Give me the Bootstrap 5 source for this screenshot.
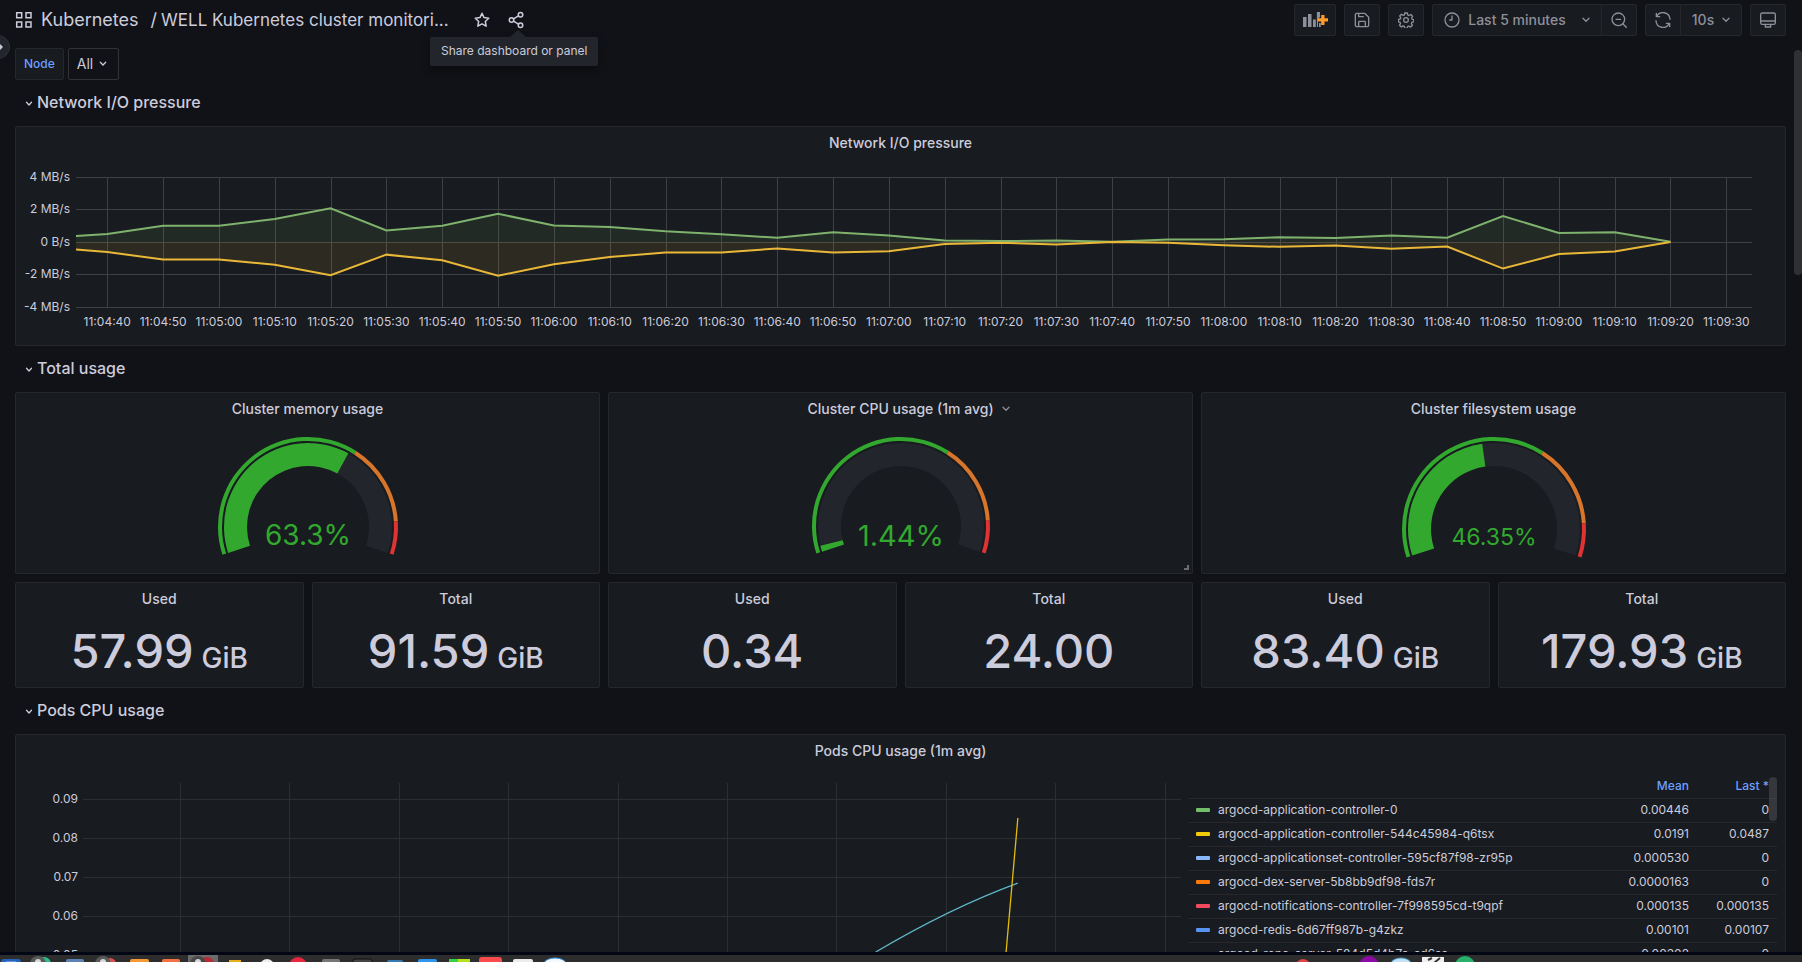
<!DOCTYPE html>
<html lang="en" data-bs-theme="dark">
<head>
<meta charset="utf-8">
<meta name="viewport" content="width=device-width, initial-scale=1">
<title>WELL Kubernetes cluster monitoring</title>
<link href="https://cdn.jsdelivr.net/npm/bootstrap@5.3.0/dist/css/bootstrap.min.css" rel="stylesheet">
<style>
  :root { --canvas: #111217; --panel: #181b1f; --line: #25272c; --ink: #ccccdc; --dim: #8f8f9b; --blue: #6e9fff; }
  body { background: var(--canvas); color: var(--ink); font-family: Inter, "Liberation Sans", sans-serif; font-size: 14px; line-height: 20px; }
  svg { display: block; flex-shrink: 0; }
  .ico { fill: none; stroke: currentColor; stroke-width: 2; stroke-linecap: round; stroke-linejoin: round; }
  .page-pad { padding-left: 15px; padding-right: 16px; }
  .scroll-area { min-height: 0; }
  .topbar { padding-top: 4px; height: 40px; }
  .crumbs { font-size: 18px; line-height: 24px; height: 32px; }
  .crumbs a { color: var(--ink); text-decoration: none; }
  .crumbs .dash-name { font-size: 17px; }
  .icon-btn { background: none; border: 0; padding: 0; color: var(--ink); }
  .tool { --bs-btn-color: var(--dim); --bs-btn-bg: var(--panel); --bs-btn-border-color: var(--line); --bs-btn-border-radius: 2px;
          --bs-btn-font-size: 14px; --bs-btn-font-weight: 500; --bs-btn-line-height: 20px; --bs-btn-padding-y: 0; --bs-btn-padding-x: 9px;
          --bs-btn-hover-color: var(--ink); --bs-btn-hover-bg: #22252b; height: 32px; display: flex; align-items: center; justify-content: center; }
  .tip { position: absolute; top: 37px; left: 430px; background: #22252b; border-radius: 2px; font-size: 12px; line-height: 16px; padding: 6px 11px 7px; box-shadow: 0 4px 8px rgba(0,0,0,.4); white-space: nowrap; }
  .tip::before { content: ""; position: absolute; left: 80px; top: -7px; border: 8px solid transparent; border-top: 0; border-bottom: 7px solid #22252b; }
  .dock-toggle { position: absolute; left: -14px; top: 35px; width: 24px; height: 24px; border-radius: 50%; background: #22252b; border: 1px solid #2f3238; padding: 0; color: var(--ink); }
  .varbar { padding-top: 8px; gap: 4px; }
  .var-name { height: 32px; padding: 0 8px; border: 1px solid var(--line); border-radius: 2px; background: var(--panel); color: var(--blue); font-size: 12px; font-weight: 500; line-height: 30px; }
  .var-pick { height: 32px; width: 51px; padding: 0 8px; border: 1px solid #303238; border-radius: 2px; color: var(--ink); font-size: 14px; appearance: none;
    background: var(--canvas) url("data:image/svg+xml,%3Csvg xmlns='http://www.w3.org/2000/svg' width='8' height='6' viewBox='0 0 8 6'%3E%3Cpath d='M1.300 1.300 4 4l2.700-2.700' fill='none' stroke='%23ccccdc' stroke-width='1.300' stroke-linecap='round'/%3E%3C/svg%3E") no-repeat right 11px center; }
  .section-row { height: 46px; padding: 0 0 2px 10px; gap: 4px; font-size: 16px; font-weight: 500; line-height: 24px; background: none; border: 0; color: var(--ink); }
  .panel { background: var(--panel); border: 1px solid var(--line); border-radius: 2px; min-width: 0; position: relative; }
  .panel-head { height: 32px; font-size: 14px; font-weight: 500; line-height: 20px; margin: 0; color: var(--ink); }
  .panel-row { display: grid; gap: 8px; }
  .three { grid-template-columns: repeat(3, 1fr); }
  .six { grid-template-columns: repeat(6, 1fr); }
  .gauge-panel { height: 182px; }
  .stat-panel { height: 106px; }
  .stat-value { font-size: 47px; font-weight: 500; line-height: 56px; height: 72px; }
  .stat-value span { font-size: 28px; margin-left: 8px; }
  .grip { position: absolute; right: 3px; bottom: 3px; width: 5px; height: 5px; border-right: 2px solid #6a6c72; border-bottom: 2px solid #6a6c72; }
  .chart { width: 100%; overflow: hidden; }
  .chart text { fill: var(--ink); font-size: 12px; }
  .net-chart { height: 186px; }
  .pods-chart { height: 240px; flex: 1 1 0; min-width: 0; }
  .legend-box { width: 589px; margin: 8px 8px 0 7px; position: relative; flex-shrink: 0; }
  .legend-table { width: 100%; font-size: 12px; line-height: 16px; border-collapse: collapse; }
  .legend-table th, .legend-table td { height: 24px; padding: 0 8px; border-bottom: 1px solid var(--line); white-space: nowrap; font-weight: 400; text-align: left; }
  .legend-table thead th { color: var(--blue); font-weight: 500; height: 23px; }
  .legend-table .num { text-align: right; width: 80px; }
  .key { display: inline-block; width: 14px; height: 4px; border-radius: 1px; margin-right: 8px; vertical-align: 2px; }
  .thumb { position: absolute; right: 0; background: rgba(204,204,220,.16); border-radius: 4px; width: 8px; }
  .legend-box .thumb { top: 2px; height: 44px; }
  .page-thumb { top: 50px; height: 225px; }
  .taskbar { background: #2d2d2d; border-top: 3px solid #020615; height: 10px; position: relative; flex-shrink: 0; }
</style>
</head>
<body class="vh-100 overflow-hidden d-flex flex-column">
<div class="scroll-area flex-fill overflow-hidden position-relative">
  <header class="topbar page-pad d-flex justify-content-between align-items-start">
    <div class="d-flex align-items-center crumbs">
      <svg width="18" height="18" viewBox="0 0 18 18" class="ico" style="stroke-width:1.500;stroke-linejoin:miter"><path d="M1.700 1.700h5v5h-5zM11 1.700h5v5h-5zM1.700 11h5v5h-5zM11 11h5v5h-5z"/></svg>
      <a href="#" class="ps-2">Kubernetes</a><span class="ps-2 ms-1 pe-1">/</span><a href="#" class="dash-name">WELL Kubernetes cluster monitori...</a>
      <button class="icon-btn ms-4" aria-label="Mark as favorite"><svg width="18" height="18" viewBox="0 0 24 24" class="ico"><path d="M12 3l2.700 5.800 6.300.8-4.600 4.300 1.200 6.300L12 17.100l-5.600 3.100 1.200-6.300L3 9.600l6.300-.8z"/></svg></button>
      <button class="icon-btn ms-3" aria-label="Share dashboard or panel"><svg width="18" height="18" viewBox="0 0 24 24" class="ico"><circle cx="18" cy="5" r="3"/><circle cx="6" cy="12" r="3"/><circle cx="18" cy="19" r="3"/><path d="M8.700 10.500l6.600-4M8.700 13.500l6.600 4"/></svg></button>
    </div>
    <div class="d-flex gap-2">
      <button class="btn tool" aria-label="Add panel" style="width:42px;padding:0"><svg width="26" height="18" viewBox="0 0 26 18"><path fill="#8f8f9b" d="M1 6h3.500v10H1zM6 3h3.500v13H6zM11 8.500h2.800V16H11zM14.900 1H18v5l-2 2v8h-1.100zM17 12h1.800v4H17z"/><path fill="#ff9b2d" d="M19.200 4h3.300v3.200H26v3.400h-3.500V14h-3.300v-3.400h-3.300V7.200h3.300z"/></svg></button>
      <button class="btn tool" aria-label="Save dashboard"><svg width="16" height="16" viewBox="0 0 24 24" class="ico"><path d="M2 4a2 2 0 0 1 2-2h12l6 6v12a2 2 0 0 1-2 2H4a2 2 0 0 1-2-2zM7 2v5h7M7 22v-7a1 1 0 0 1 1-1h8a1 1 0 0 1 1 1v7"/></svg></button>
      <button class="btn tool" aria-label="Dashboard settings"><svg width="16" height="16" viewBox="0 0 24 24" class="ico"><path d="M10 1.500h4l.7 3 2 .8 2.600-1.600 2.600 2.700-1.500 2.600.8 2 2.500.5v3.200l-2.800.7-.8 2 1.600 2.500-2.700 2.700-2.600-1.500-2 .8-.6 2.600h-3.600l-.7-2.800-2-.8-2.500 1.600-2.700-2.700 1.500-2.600-.8-2-2.500-.6v-3.400l2.800-.7.8-2-1.600-2.500 2.700-2.600 2.600 1.600 2-.8z"/><circle cx="12" cy="12" r="3.500"/></svg></button>
      <div class="btn-group">
        <button class="btn tool" style="width:170px"><svg width="16" height="16" viewBox="0 0 24 24" class="ico"><circle cx="12" cy="12" r="10.500"/><path d="M12 6v6H8.500"/></svg><span class="ms-2 me-3">Last 5 minutes</span><svg width="8" height="6" viewBox="0 0 8 6" class="ico" style="stroke-width:1.300"><path d="M1 1.300 4 4.300l3-3"/></svg></button>
        <button class="btn tool" aria-label="Zoom out time range"><svg width="16" height="16" viewBox="0 0 24 24" class="ico"><circle cx="11" cy="11" r="9.500"/><path d="M7.500 11h7M18 18l5 5"/></svg></button>
      </div>
      <div class="btn-group">
        <button class="btn tool" aria-label="Refresh dashboard"><svg width="16" height="16" viewBox="0 0 24 24" class="ico"><path d="M2 2v5h5M2.500 7A10.500 10.500 0 0 1 22.500 11M22 22v-5h-5M21.500 17A10.500 10.500 0 0 1 1.500 13"/></svg></button>
        <button class="btn tool" style="width:62px">10s<svg width="8" height="6" viewBox="0 0 8 6" class="ico ms-2" style="stroke-width:1.300"><path d="M1 1.300 4 4.300l3-3"/></svg></button>
      </div>
      <button class="btn tool" aria-label="Cycle view mode"><svg width="16" height="16" viewBox="0 0 24 24" class="ico"><rect x="1" y="1.500" width="22" height="17" rx="2.500"/><path d="M1 13.500h22M8 18.500v4h8v-4"/></svg></button>
    </div>
  </header>
  <div class="tip" role="tooltip">Share dashboard or panel</div>
  <button class="dock-toggle" aria-label="Open menu"><svg width="22" height="22" viewBox="0 0 22 22" class="ico" style="stroke-width:1.500"><path d="M11 11h4M13 9l2 2-2 2"/></svg></button>

  <main class="page-pad">
    <div class="varbar d-flex">
      <label class="var-name" for="node">Node</label>
      <select class="var-pick" id="node"><option>All</option></select>
    </div>

    <button class="section-row d-flex align-items-center w-100"><svg width="8" height="6" viewBox="0 0 8 6" class="ico mt-1" style="stroke-width:1.300"><path d="M1.500 1.300 4 4l2.500-2.700"/></svg>Network I/O pressure</button>
    <section class="panel">
      <h2 class="panel-head d-flex align-items-center justify-content-center">Network I/O pressure</h2>
      <svg class="chart net-chart" id="net"></svg>
    </section>

    <button class="section-row d-flex align-items-center w-100"><svg width="8" height="6" viewBox="0 0 8 6" class="ico mt-1" style="stroke-width:1.300"><path d="M1.500 1.300 4 4l2.500-2.700"/></svg>Total usage</button>
    <div class="panel-row three mb-2">
      <section class="panel gauge-panel">
        <h2 class="panel-head d-flex align-items-center justify-content-center">Cluster memory usage</h2>
        <svg class="gauge mx-auto" width="200" height="140" data-value="63.3" data-r="90" data-size="28" data-base="120"></svg>
      </section>
      <section class="panel gauge-panel">
        <h2 class="panel-head d-flex align-items-center justify-content-center">Cluster CPU usage (1m avg)<svg width="8" height="6" viewBox="0 0 8 6" class="ico ms-2" style="stroke-width:1.300;color:var(--dim);margin-right:-16px"><path d="M1 1.300 4 4.300l3-3"/></svg></h2>
        <svg class="gauge mx-auto" width="200" height="140" data-value="1.44" data-r="89" data-size="29" data-base="121"></svg>
        <span class="grip"></span>
      </section>
      <section class="panel gauge-panel">
        <h2 class="panel-head d-flex align-items-center justify-content-center">Cluster filesystem usage</h2>
        <svg class="gauge mx-auto" width="200" height="140" data-value="46.35" data-r="92" data-size="23" data-base="120"></svg>
      </section>
    </div>
    <div class="panel-row six">
      <section class="panel stat-panel"><h2 class="panel-head d-flex align-items-center justify-content-center">Used</h2><div class="stat-value d-flex justify-content-center align-items-baseline pt-2">57.99<span>GiB</span></div></section>
      <section class="panel stat-panel"><h2 class="panel-head d-flex align-items-center justify-content-center">Total</h2><div class="stat-value d-flex justify-content-center align-items-baseline pt-2">91.59<span>GiB</span></div></section>
      <section class="panel stat-panel"><h2 class="panel-head d-flex align-items-center justify-content-center">Used</h2><div class="stat-value d-flex justify-content-center align-items-baseline pt-2">0.34</div></section>
      <section class="panel stat-panel"><h2 class="panel-head d-flex align-items-center justify-content-center">Total</h2><div class="stat-value d-flex justify-content-center align-items-baseline pt-2">24.00</div></section>
      <section class="panel stat-panel"><h2 class="panel-head d-flex align-items-center justify-content-center">Used</h2><div class="stat-value d-flex justify-content-center align-items-baseline pt-2">83.40<span>GiB</span></div></section>
      <section class="panel stat-panel"><h2 class="panel-head d-flex align-items-center justify-content-center">Total</h2><div class="stat-value d-flex justify-content-center align-items-baseline pt-2">179.93<span>GiB</span></div></section>
    </div>

    <button class="section-row d-flex align-items-center w-100"><svg width="8" height="6" viewBox="0 0 8 6" class="ico mt-1" style="stroke-width:1.300"><path d="M1.500 1.300 4 4l2.500-2.700"/></svg>Pods CPU usage</button>
    <section class="panel">
      <h2 class="panel-head d-flex align-items-center justify-content-center">Pods CPU usage (1m avg)</h2>
      <div class="d-flex">
        <svg class="chart pods-chart" id="pods"></svg>
        <div class="legend-box">
          <table class="legend-table">
            <thead><tr><th></th><th class="num">Mean</th><th class="num">Last *</th></tr></thead>
            <tbody>
              <tr><td><span class="key" style="background:#73bf69"></span>argocd-application-controller-0</td><td class="num">0.00446</td><td class="num">0</td></tr>
              <tr><td><span class="key" style="background:#f2cc0c"></span>argocd-application-controller-544c45984-q6tsx</td><td class="num">0.0191</td><td class="num">0.0487</td></tr>
              <tr><td><span class="key" style="background:#8ab8ff"></span>argocd-applicationset-controller-595cf87f98-zr95p</td><td class="num">0.000530</td><td class="num">0</td></tr>
              <tr><td><span class="key" style="background:#ff780a"></span>argocd-dex-server-5b8bb9df98-fds7r</td><td class="num">0.0000163</td><td class="num">0</td></tr>
              <tr><td><span class="key" style="background:#f2495c"></span>argocd-notifications-controller-7f998595cd-t9qpf</td><td class="num">0.000135</td><td class="num">0.000135</td></tr>
              <tr><td><span class="key" style="background:#5794f2"></span>argocd-redis-6d67ff987b-g4zkz</td><td class="num">0.00101</td><td class="num">0.00107</td></tr>
              <tr><td><span class="key" style="background:#b877d9"></span>argocd-repo-server-584d5d4b7c-sd6ss</td><td class="num">0.00302</td><td class="num">0</td></tr>
            </tbody>
          </table>
          <div class="thumb"></div>
        </div>
      </div>
    </section>
  </main>
  <div class="thumb page-thumb"></div>
</div>
<footer class="taskbar">
  <svg width="100%" height="7" aria-hidden="true">
    <rect x="1" y="4" width="20" height="8" rx="3" fill="#2463b8"/><rect x="6" y="6" width="10" height="3" fill="#5c92e0"/>
    <circle cx="44" cy="9" r="7" fill="#2bbf8a"/><circle cx="38" cy="9" r="8" fill="#5a5a5a"/><circle cx="38" cy="7" r="3" fill="#d8d8d8"/>
    <rect x="66" y="4" width="18" height="6" rx="2" fill="#5d83b5"/>
    <circle cx="110" cy="9" r="6" fill="#e2504a"/><circle cx="103" cy="9" r="8" fill="#5a5a5a"/><circle cx="103" cy="7" r="3" fill="#d8d8d8"/>
    <rect x="130" y="4" width="19" height="6" rx="2" fill="#f39a34"/><rect x="162" y="4" width="18" height="6" rx="2" fill="#f57144"/>
    <rect x="188" y="0" width="30" height="7" fill="#6b6b6b"/><circle cx="207" cy="9" r="7" fill="#b92a35"/><circle cx="198" cy="9" r="8" fill="#484848"/><circle cx="198" cy="7" r="3" fill="#d8d8d8"/>
    <rect x="229" y="5" width="12" height="4" fill="#e8ae1c"/><circle cx="267" cy="11" r="7" fill="#eeeeea"/><circle cx="298" cy="11" r="9" fill="#e8263d"/>
    <rect x="322" y="4" width="18" height="6" rx="2" fill="#777"/><rect x="353" y="4" width="19" height="6" rx="2" fill="#444" stroke="#111"/>
    <rect x="387" y="5" width="16" height="6" rx="2" fill="#347ab0"/><rect x="418" y="4" width="19" height="6" rx="2" fill="#2f94ea"/>
    <rect x="449" y="4" width="21" height="6" fill="#b4e31a"/><rect x="449" y="4" width="9" height="6" fill="#35d045"/>
    <rect x="479" y="2" width="23" height="8" rx="3" fill="#f94b4b"/><rect x="513" y="4" width="20" height="6" rx="2" fill="#ececec"/>
    <ellipse cx="555" cy="9" rx="11" ry="6" fill="#f4f8fb" stroke="#3a9ae8"/>
    <circle cx="1303" cy="11" r="7" fill="#e04444"/><circle cx="1369" cy="11" r="10" fill="#8a0ca5"/><ellipse cx="1401" cy="9" rx="10" ry="6" fill="#c4e2f5" stroke="#4aa4dc"/>
    <rect x="1422" y="2" width="22" height="8" fill="#efefef"/><path d="M1428 5l4-2M1434 8l6-5" stroke="#333" stroke-width="2"/><circle cx="1465" cy="11" r="10" fill="#27b06a"/>
  </svg>
</footer>
<script src="https://cdn.jsdelivr.net/npm/bootstrap@5.3.0/dist/js/bootstrap.bundle.min.js"></script>
<script>
  const line = (x1, y1, x2, y2, c) => `<path d="M${x1} ${y1}L${x2} ${y2}" stroke="${c}" fill="none" shape-rendering="crispEdges"/>`;
  const label = (x, y, anchor, t) => `<text x="${x}" y="${y}" text-anchor="${anchor}">${t}</text>`;

  // Network throughput: one sample every 10 s, in MB/s.
  const received = [0.5,1,1,1.42,2.08,0.71,1,1.74,1.02,0.92,0.66,0.48,0.26,0.6,0.4,0.1,0.06,0.09,0.01,0.16,0.17,0.3,0.25,0.4,0.27,1.6,0.56,0.6,0.01];
  const sent = [-0.62,-1.08,-1.08,-1.4,-2.05,-0.78,-1.13,-2.08,-1.38,-0.93,-0.65,-0.65,-0.4,-0.65,-0.57,-0.12,-0.05,-0.16,0,-0.05,-0.2,-0.3,-0.22,-0.42,-0.28,-1.64,-0.74,-0.58,0];

  function drawNetwork() {
    const el = document.getElementById('net'), w = el.clientWidth;
    const left = 60, right = w - 33, step = (right - left) / 30.020, first = left + step * 0.56;
    const y = v => 83 - v * 16.2, row = v => Math.floor(y(v) + 0.25), grid = '#3e4144';
    let s = '';
    for (const v of [4, 2, 0, -2, -4]) {
      s += line(left, row(v), right, row(v), grid);
      s += label(left - 6, row(v) + 4, 'end', v ? v + ' MB/s' : '0 B/s');
    }
    for (let i = 0; i < 30; i++) {
      const x = first + i * step, t = 280 + i * 10;
      s += line(Math.round(x), y(4), Math.round(x), y(-4), grid);
      s += label(x, 167, 'middle', `11:0${Math.floor(t / 60)}:${String(t % 60).padStart(2, '0')}`);
    }
    for (const [data, start, color] of [[received, 0.37, '#7eb26d'], [sent, -0.47, '#eab839']]) {
      const pts = [[left, y(start)], ...data.map((v, i) => [first + i * step, y(v)])];
      const d = pts.map(p => p.join(' ')).join('L');
      s += `<path d="M${left} ${y(0)}L${d}Z" fill="${color}" fill-opacity=".1"/><path d="M${d}" fill="none" stroke="${color}" stroke-width="2"/>`;
    }
    el.innerHTML = s;
  }

  function drawPods() {
    const el = document.getElementById('pods'), w = el.clientWidth, left = 67, right = w, k = (right - left) / 1097;
    let s = '';
    for (let i = 0; i < 5; i++) {
      s += line(left, 32 + i * 39, right, 32 + i * 39, '#2b2f32');
      s += label(left - 5, 36 + i * 39, 'end', (0.09 - i * 0.01).toFixed(2));
    }
    for (let i = 0; i < 10; i++) {
      const x = Math.round(left + (97 + i * 109.3) * k);
      s += line(x, 16, x, 240, '#2b2f32');
    }
    const px = x => left + x * k;
    s += `<path d="M${px(792)} 185Q${px(866)} 141 ${px(934)} 116" fill="none" stroke="#5fb9c8" stroke-width="1.300"/>`;
    s += `<path d="M${px(922)} 188L${px(934)} 51" fill="none" stroke="#e0bd0d" stroke-width="1.300"/>`;
    el.innerHTML = s;
  }

  // Gauges sweep 216 degrees, starting 108 degrees left of the top.
  function drawGauge(el) {
    const { value, r, size, base } = el.dataset, R = +r, cx = 100, cy = 12 + R;
    const at = (p, rad) => { const a = (p * 2.16 - 108) * Math.PI / 180; return (cx + rad * Math.sin(a)) + ' ' + (cy - rad * Math.cos(a)); };
    const arc = (a, b, out, inn, c) => { const big = (b - a) * 2.16 > 180 ? 1 : 0;
      return `<path fill="${c}" d="M${at(a, out)}A${out} ${out} 0 ${big} 1 ${at(b, out)}L${at(b, inn)}A${inn} ${inn} 0 ${big} 0 ${at(a, inn)}Z"/>`; };
    const green = '#32a82e';
    el.innerHTML = arc(0, 100, R - 6, R - 29, '#22252b') + arc(0, Math.max(+value, 2), R - 6, R - 29, green)
      + arc(0, 65, R, R - 4, green) + arc(65, 90, R, R - 4, '#d7752a') + arc(90, 100, R, R - 4, '#e03333')
      + `<text x="${cx}" y="${base}" text-anchor="middle" font-size="${size}" fill="${green}">${value}%</text>`;
  }

  function drawAll() { drawNetwork(); drawPods(); }
  document.querySelectorAll('.gauge').forEach(drawGauge);
  drawAll();
  addEventListener('resize', drawAll);
</script>
</body>
</html>
